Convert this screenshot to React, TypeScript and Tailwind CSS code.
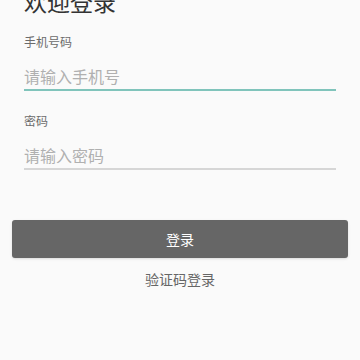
import React, { useState } from "react";

export default function App() {
  const [phone, setPhone] = useState("");
  const [password, setPassword] = useState("");

  return (
    <div
      className="w-[360px] h-[360px] overflow-hidden bg-[#fafafa] flex flex-col"
      style={{ fontFamily: '"Noto Sans CJK SC", "Noto Sans", sans-serif' }}
    >
      <div className="px-6 flex flex-col">
        <h1 className="mt-[-14px] h-[30px] leading-[30px] text-[23px] text-[#333333]">欢迎登录</h1>

        <label className="mt-[18px] h-4 leading-4 text-[12px] text-[#6b6b6b]">手机号码</label>
        <input
          value={phone}
          onChange={(e) => setPhone(e.target.value)}
          placeholder="请输入手机号"
          className="mt-[15px] h-[26px] leading-6 pb-[2px] text-[16px] text-[#333333] placeholder:text-[#b0b0b0] bg-transparent border-b-2 border-[#80c4bb] outline-none"
        />

        <label className="mt-[22px] h-4 leading-4 text-[12px] text-[#6b6b6b]">密码</label>
        <input
          type="password"
          value={password}
          onChange={(e) => setPassword(e.target.value)}
          placeholder="请输入密码"
          className="mt-[15px] h-[26px] leading-6 pb-[2px] text-[16px] text-[#333333] placeholder:text-[#b0b0b0] bg-transparent border-b-2 border-[#d6d6d6] outline-none"
        />
      </div>

      <div className="px-3 mt-[50px]">
        <button className="w-full h-[38px] rounded-[3px] bg-[#666666] text-white text-[14px] shadow-sm">
          登录
        </button>
      </div>

      <button className="mt-[11px] h-5 leading-5 text-[14px] text-[#666666] self-center">验证码登录</button>
    </div>
  );
}
